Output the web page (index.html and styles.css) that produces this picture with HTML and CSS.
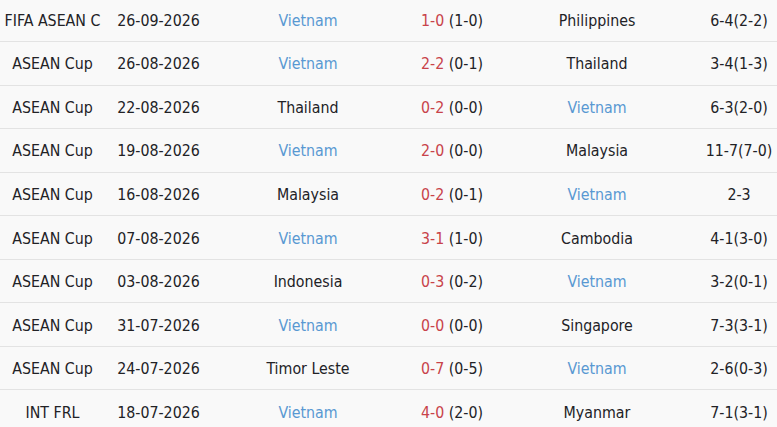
FILE: index.html
```html
<!DOCTYPE html>
<html>
<head>
<meta charset="utf-8">
<link rel="stylesheet" href="styles.css">
</head>
<body>
<table class="matches">
<colgroup>
<col class="c-comp"><col class="c-date"><col class="c-home"><col class="c-score"><col class="c-away"><col class="c-corner">
</colgroup>
<tbody>
<tr><td class="comp">FIFA ASEAN C</td><td>26-09-2026</td><td class="team vn">Vietnam</td><td class="score"><span class="ft">1-0</span> (1-0)</td><td class="team">Philippines</td><td>6-4(2-2)</td></tr>
<tr><td class="comp">ASEAN Cup</td><td>26-08-2026</td><td class="team vn">Vietnam</td><td class="score"><span class="ft">2-2</span> (0-1)</td><td class="team">Thailand</td><td>3-4(1-3)</td></tr>
<tr><td class="comp">ASEAN Cup</td><td>22-08-2026</td><td class="team">Thailand</td><td class="score"><span class="ft">0-2</span> (0-0)</td><td class="team vn">Vietnam</td><td>6-3(2-0)</td></tr>
<tr><td class="comp">ASEAN Cup</td><td>19-08-2026</td><td class="team vn">Vietnam</td><td class="score"><span class="ft">2-0</span> (0-0)</td><td class="team">Malaysia</td><td>11-7(7-0)</td></tr>
<tr><td class="comp">ASEAN Cup</td><td>16-08-2026</td><td class="team">Malaysia</td><td class="score"><span class="ft">0-2</span> (0-1)</td><td class="team vn">Vietnam</td><td>2-3</td></tr>
<tr><td class="comp">ASEAN Cup</td><td>07-08-2026</td><td class="team vn">Vietnam</td><td class="score"><span class="ft">3-1</span> (1-0)</td><td class="team">Cambodia</td><td>4-1(3-0)</td></tr>
<tr><td class="comp">ASEAN Cup</td><td>03-08-2026</td><td class="team">Indonesia</td><td class="score"><span class="ft">0-3</span> (0-2)</td><td class="team vn">Vietnam</td><td>3-2(0-1)</td></tr>
<tr><td class="comp">ASEAN Cup</td><td>31-07-2026</td><td class="team vn">Vietnam</td><td class="score"><span class="ft">0-0</span> (0-0)</td><td class="team">Singapore</td><td>7-3(3-1)</td></tr>
<tr><td class="comp">ASEAN Cup</td><td>24-07-2026</td><td class="team">Timor Leste</td><td class="score"><span class="ft">0-7</span> (0-5)</td><td class="team vn">Vietnam</td><td>2-6(0-3)</td></tr>
<tr><td class="comp">INT FRL</td><td>18-07-2026</td><td class="team vn">Vietnam</td><td class="score"><span class="ft">4-0</span> (2-0)</td><td class="team">Myanmar</td><td>7-1(3-1)</td></tr>
</tbody>
</table>
</body>
</html>
```
FILE: styles.css
```css
html, body {
  margin: 0;
  padding: 0;
  background: #f9f9f9;
}
body {
  overflow: hidden;
  width: 777px;
  height: 427px;
}
.matches {
  border-collapse: collapse;
  table-layout: fixed;
  width: 784px;
  margin-top: -1.5px;
  font-family: "DejaVu Sans Condensed", "Liberation Sans", sans-serif;
  font-size: 15.8px;
  color: #222226;
}
.c-comp { width: 105px; }
.c-date { width: 107px; }
.c-home { width: 192px; }
.c-score { width: 96px; }
.c-away { width: 194px; }
.c-corner { width: 90px; }
.matches td {
  height: 41.55px;
  padding: 1px 0 0 0;
  text-align: center;
  vertical-align: middle;
  border-bottom: 1px solid #e3e3e3;
  white-space: nowrap;
  overflow: hidden;
}
.matches td.comp {
  text-overflow: clip;
}
.team.vn {
  color: #5898d2;
}
.ft {
  color: #c8434a;
}
```
